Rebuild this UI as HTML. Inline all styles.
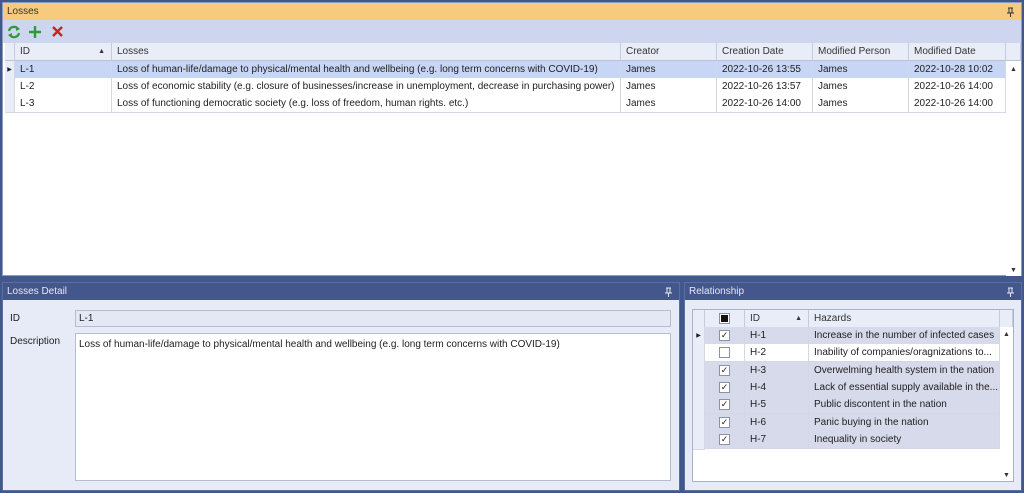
<!DOCTYPE html>
<html><head><style>
*{margin:0;padding:0;box-sizing:border-box}
body{width:1024px;height:493px;background:#42578b;font-family:"Liberation Sans",sans-serif;font-size:10px;color:#1e1e1e;position:relative;overflow:hidden}
.abs{position:absolute}
.cell{position:absolute;height:18px;line-height:18px;padding-left:5px;border-right:1px solid #d4d8e4;border-bottom:1px solid #d4d8e4;white-space:nowrap;overflow:hidden;text-overflow:ellipsis}
.hd{background:#e9edf8;color:#333;border-right:1px solid #c4cbe0;border-bottom:1px solid #b8c0da}
.chk{position:absolute;width:11px;height:11px;border:1px solid #8a92a8;background:#fff;left:14px;top:3px;font-size:9px;line-height:9px;text-align:center}
.pin{position:absolute;right:6px;top:4px;width:9px;height:10px}
</style></head><body>
<div class="abs" style="left:2px;top:2px;width:1020px;height:274px;background:#fff;border:1px solid #8d9cc4"></div>
<div class="abs" style="left:3px;top:3px;width:1018px;height:17px;background:#f6cb80;line-height:17px;padding-left:4px;color:#333">Losses<svg class="pin" viewBox="0 0 9 10"><path d="M2 1H7M3 1V6M6 1V6M1 6H8M4.5 6V10" stroke="#333" fill="none"/></svg></div>
<div class="abs" style="left:3px;top:20px;width:1018px;height:23px;background:#cdd6ee"></div>
<svg class="abs" style="left:7px;top:25px" width="60" height="14" viewBox="0 0 60 14">
<path d="M2 6 A5 5 0 0 1 11 4 M12 8 A5 5 0 0 1 3 10" stroke="#2e9a3a" stroke-width="2.2" fill="none"/>
<path d="M9 1 L13 4 L9 6Z M5 13 L1 10 L5 8Z" fill="#2e9a3a"/>
<path d="M28 1 V13 M22 7 H34" stroke="#2e9a3a" stroke-width="2.4"/>
<path d="M46 2 L55 11 M55 2 L46 11" stroke="#c0281e" stroke-width="2.4"/>
</svg>
<div id="g"></div>
<div class="abs" style="left:1006px;top:61px;width:15px;height:215px;background:#fff;font-size:7px;text-align:center;color:#333"><div style="margin-top:5px">▲</div><div style="position:absolute;bottom:2px;width:15px">▼</div></div>

<div class="abs" style="left:2px;top:282px;width:678px;height:209px;background:#e7ebf7;border:1px solid #5a6ea0"></div>
<div class="abs" style="left:3px;top:283px;width:676px;height:17px;background:#44578c;color:#e4e8f4;line-height:17px;padding-left:4px">Losses Detail<svg class="pin" viewBox="0 0 9 10"><path d="M2 1H7M3 1V6M6 1V6M1 6H8M4.5 6V10" stroke="#e4e8f4" fill="none"/></svg></div>
<div class="abs" style="left:10px;top:313px">ID</div>
<div class="abs" style="left:10px;top:336px">Description</div>
<div class="abs" style="left:75px;top:310px;width:596px;height:17px;border:1px solid #b5bdd4;background:#e4e8f4;line-height:15px;padding-left:3px">L-1</div>
<div class="abs" style="left:75px;top:333px;width:596px;height:148px;border:1px solid #b5bdd4;background:#fff;padding:5px 3px">Loss of human-life/damage to physical/mental health and wellbeing (e.g. long term concerns with COVID-19)</div>

<div class="abs" style="left:684px;top:282px;width:338px;height:209px;background:#e7ebf7;border:1px solid #5a6ea0"></div>
<div class="abs" style="left:685px;top:283px;width:336px;height:17px;background:#44578c;color:#e4e8f4;line-height:17px;padding-left:4px">Relationship<svg class="pin" viewBox="0 0 9 10"><path d="M2 1H7M3 1V6M6 1V6M1 6H8M4.5 6V10" stroke="#e4e8f4" fill="none"/></svg></div>
<div class="abs" style="left:692px;top:309px;width:322px;height:173px;background:#fff;border:1px solid #a8b2cc"></div>
<div id="r"></div>
<div class="abs" style="left:1000px;top:327px;width:13px;height:154px;font-size:7px;text-align:center;color:#333;background:#fff"><div style="margin-top:4px">▲</div><div style="position:absolute;bottom:2px;width:13px">▼</div></div>
<script>
var g=document.getElementById('g'),h='';
var cols=[[5,10,''],[15,97,'ID'],[112,509,'Losses'],[621,96,'Creator'],[717,96,'Creation Date'],[813,96,'Modified Person'],[909,97,'Modified Date'],[1006,15,'']];
cols.forEach(function(c){h+='<div class="cell hd" style="left:'+c[0]+'px;top:43px;width:'+c[1]+'px">'+c[2]+(c[2]=='ID'?'<span style="position:absolute;right:6px;font-size:7px">▲</span>':'')+'</div>'});
var rows=[['L-1','Loss of human-life/damage to physical/mental health and wellbeing (e.g. long term concerns with COVID-19)','James','2022-10-26 13:55','James','2022-10-28 10:02'],['L-2','Loss of economic stability (e.g. closure of businesses/increase in unemployment, decrease in purchasing power)','James','2022-10-26 13:57','James','2022-10-26 14:00'],['L-3','Loss of functioning democratic society (e.g. loss of freedom, human rights. etc.)','James','2022-10-26 14:00','James','2022-10-26 14:00']];
rows.forEach(function(r,i){var y=61+i*17;var bg=i==0?'#c8d6f6':'#fff';
h+='<div class="cell" style="left:5px;top:'+y+'px;width:10px;background:#e9edf8;padding:0;font-size:6px;text-align:center">'+(i==0?'▶':'')+'</div>';
for(var k=0;k<6;k++)h+='<div class="cell" style="left:'+cols[k+1][0]+'px;top:'+y+'px;width:'+cols[k+1][1]+'px;background:'+bg+';text-overflow:clip">'+r[k]+'</div>';});
g.innerHTML=h;
var rr=document.getElementById('r');h='';
var rc=[[693,12,''],[705,40,''],[745,64,'ID'],[809,191,'Hazards'],[1000,13,'']];
rc.forEach(function(c,j){h+='<div class="cell hd" style="left:'+c[0]+'px;top:310px;width:'+c[1]+'px">'+(j==1?'<div class="chk" style="background:#fff"><div style="width:7px;height:7px;background:#111;margin:1px"></div></div>':c[2])+(c[2]=='ID'?'<span style="position:absolute;right:6px;font-size:7px">▲</span>':'')+'</div>'});
var hz=[['H-1','Increase in the number of infected cases',1],['H-2','Inability of companies/oragnizations to...',0],['H-3','Overwelming health system in the nation',1],['H-4','Lack of essential supply available in the...',1],['H-5','Public discontent in the nation',1],['H-6','Panic buying in the nation',1],['H-7','Inequality in society',1]];
hz.forEach(function(r,i){var y=Math.round(327+i*17.33);var bg=r[2]?'#d7daea':'#fff';
h+='<div class="cell" style="left:693px;top:'+y+'px;width:12px;height:19px;background:#e9edf8;padding:0;font-size:6px;text-align:center">'+(i==0?'▶':'')+'</div>';
h+='<div class="cell" style="left:705px;top:'+y+'px;width:40px;background:'+bg+'"><div class="chk">'+(r[2]?'✓':'')+'</div></div>';
h+='<div class="cell" style="left:745px;top:'+y+'px;width:64px;background:'+bg+'">'+r[0]+'</div>';
h+='<div class="cell" style="left:809px;top:'+y+'px;width:191px;background:'+bg+';text-overflow:clip">'+r[1]+'</div>';});
rr.innerHTML=h;
</script>
</body></html>
